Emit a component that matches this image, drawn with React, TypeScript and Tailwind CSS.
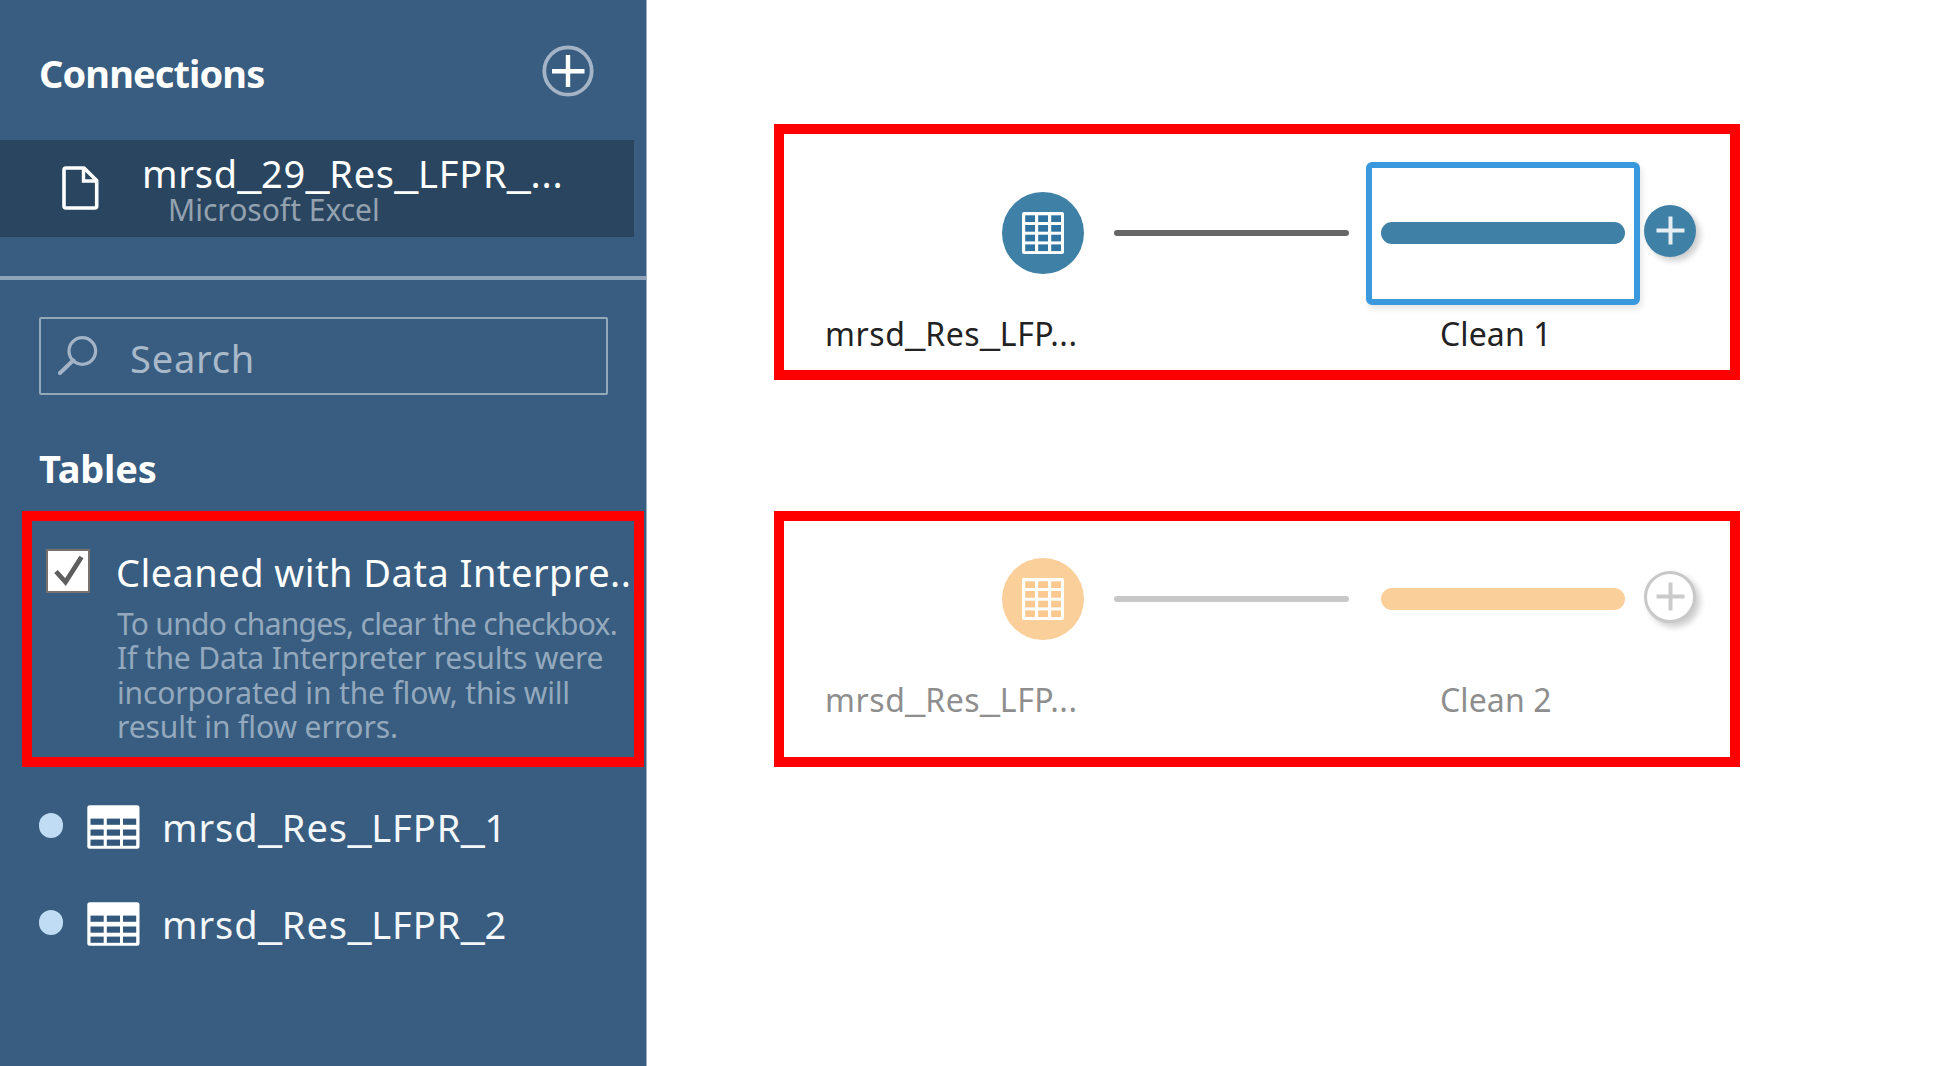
import { Fragment, ReactNode } from "react";

/* Text whose underscores are drawn wider than the body face has them. */
function Wide({ text }: { text: string }) {
  return (
    <>
      {text.split("_").map((part, i) => (
        <Fragment key={i}>
          {i > 0 && (
            <span className="relative -top-[2px] font-['Liberation_Sans',sans-serif] text-[1.1em] leading-none tracking-normal">
              _
            </span>
          )}
          {part}
        </Fragment>
      ))}
    </>
  );
}

function AddIcon() {
  return (
    <svg className="size-[52px]" viewBox="0 0 52 52" fill="none">
      <circle cx="26" cy="26" r="23.7" stroke="#a4b4c6" strokeWidth="3.8" />
      <path d="M10 26.2H42.5M26 10V42" stroke="#fff" strokeWidth="4.4" />
    </svg>
  );
}

function FileIcon() {
  return (
    <svg className="h-11 w-[37px]" viewBox="0 0 37 44" fill="none">
      <path
        d="M4 2H22L34.7 14.5V40Q34.7 42 32.7 42H4Q2 42 2 40V4Q2 2 4 2Z"
        stroke="#fff"
        strokeWidth="3.6"
        strokeLinejoin="round"
      />
      <path d="M21.5 2.5V15H34.5" stroke="#fff" strokeWidth="3.4" />
    </svg>
  );
}

function SearchIcon() {
  return (
    <svg className="h-[42px] w-[41px]" viewBox="0 0 41 42" fill="none" stroke="#a4b4c6">
      <circle cx="25.3" cy="18" r="13.3" strokeWidth="3.2" />
      <path d="M16.3 27.3L3 40" strokeWidth="4" strokeLinecap="round" />
    </svg>
  );
}

function TableIcon() {
  const cols = [3.5, 19.8, 36];
  const rows = [13.6, 24.5, 34.6];
  return (
    <svg className="h-11 w-[53px]" viewBox="0 0 53 44">
      <rect x="0.3" y="0.3" width="52.2" height="43.4" rx="2.5" fill="#fff" />
      {rows.map((y) =>
        cols.map((x) => <rect key={`${x}-${y}`} x={x} y={y} width="13.2" height="6.2" fill="#33587c" />),
      )}
    </svg>
  );
}

function GridIcon({ cell }: { cell: string }) {
  const cols = [3.2, 16.2, 29.2];
  const rows = [3.3, 13, 22.7, 32.4];
  return (
    <svg className="mr-px size-[42px]" viewBox="0 0 42 42">
      <rect width="42" height="42" rx="2" fill="#fff" />
      {rows.map((y) => cols.map((x) => <rect key={`${x}-${y}`} x={x} y={y} width="9.8" height="6.7" fill={cell} />))}
    </svg>
  );
}

function TableRow({ name }: { name: string }) {
  return (
    <div className="flex h-11 items-center pl-[39px]">
      <span className="mb-[3px] h-[25px] w-6 rounded-full bg-[#bfdcf4]" />
      <span className="ml-6">
        <TableIcon />
      </span>
      <span className="mt-[2px] ml-[22px] text-[38px] leading-10 tracking-[0.95px] text-[#f4f7fa]">
        <Wide text={name} />
      </span>
    </div>
  );
}

function Flow({ active, children }: { active: boolean; children: ReactNode }) {
  return (
    <div
      className={`h-64 w-[966px] border-[10px] border-[#ff0000] ${active ? "pt-[27px]" : "pt-[6px]"}`}
    >
      <div className="flex h-[144px] items-center">
        <div
          className={`ml-[218px] flex size-[82px] items-center justify-center rounded-full ${
            active ? "bg-[#3f80a6]" : "bg-[#fbcf9a]"
          }`}
        >
          <GridIcon cell={active ? "#2f74a0" : "#f9c98f"} />
        </div>
        <div
          className={`ml-[30px] h-[6px] w-[235px] rounded-full ${active ? "bg-[#666666]" : "bg-[#c8c8c8]"}`}
        />
        <div
          className={`ml-[17px] flex h-[143px] w-[274px] items-center justify-center rounded-[6px] border-[6px] ${
            active ? "border-[#3a98dd] shadow-[2px_4px_6px_rgba(0,0,0,0.1)]" : "border-transparent"
          }`}
        >
          <div className={`h-[22px] w-[244px] rounded-full ${active ? "bg-[#3f80a6]" : "bg-[#fbcf9a]"}`} />
        </div>
        <div
          className={`mb-[5px] ml-1 flex size-[52px] items-center justify-center rounded-full shadow-[4px_4px_6px_rgba(0,0,0,0.2)] ${
            active ? "bg-[#3f80a6]" : "border-[3px] border-[#c8c8c8] bg-white"
          }`}
        >
          <svg className="size-[29px]" viewBox="0 0 29 29" fill="none">
            <path
              d="M0.5 14.5H28.5M14.5 0.5V28.5"
              stroke={active ? "#e6eef4" : "#cbcbcb"}
              strokeWidth="4"
            />
          </svg>
        </div>
      </div>
      <div
        className={`flex pl-[41px] text-[32px] leading-10 ${active ? "mt-[9px] text-[#222222]" : "mt-[9px] text-[#8e8e8e]"}`}
      >
        {children}
      </div>
    </div>
  );
}

function FlowLabels({ source, step }: { source: string; step: string }) {
  return (
    <>
      <span className="w-[615px] tracking-[0.6px]">
        <Wide text={source} />
      </span>
      <span className="tracking-[0.1px]">{step}</span>
    </>
  );
}

export default function App() {
  return (
    <div className="flex h-[1066px] w-[1933px] overflow-hidden bg-white font-['Noto_Sans',sans-serif] whitespace-nowrap">
      <aside className="flex w-[647px] flex-col border-r border-[#9db0c3] bg-[#385d80]">
        <div className="flex h-[140px] items-start justify-between pr-[52px] pl-[39px]">
          <h2 className="mt-[53px] text-[38px] leading-10 font-bold tracking-[-0.9px] text-white">Connections</h2>
          <span className="mt-[45px]">
            <AddIcon />
          </span>
        </div>

        <div className="flex h-[97px] w-[634px] bg-[#29455f] pl-[62px]">
          <span className="mt-[26px]">
            <FileIcon />
          </span>
          <div className="ml-[43px] pt-[13px]">
            <p className="text-[38px] leading-10 tracking-[0.75px] text-white">
              <Wide text="mrsd_29_Res_LFPR_..." />
            </p>
            <p className="pl-[26px] text-[30px] leading-[30px] text-[#94a2af]">Microsoft Excel</p>
          </div>
        </div>

        <div className="mt-[39px] h-1 bg-[#8fa4b9]" />

        <div className="mt-[37px] ml-[39px] flex h-[78px] w-[569px] items-center rounded-[2px] border-2 border-[#94a8bc]">
          <span className="mb-1 ml-4">
            <SearchIcon />
          </span>
          <span className="mt-1 ml-8 text-[38px] leading-10 tracking-[0.8px] text-[#a9b9c9]">Search</span>
        </div>

        <h2 className="mt-[53px] ml-[39px] text-[38px] leading-10 font-bold tracking-[-0.2px] text-white">Tables</h2>

        <div className="mt-[23px] ml-[22px] flex h-64 w-[622px] overflow-hidden border-[10px] border-[#ff0000]">
          <span className="mt-[28px] ml-[14px] size-11 shrink-0 border-2 border-[#77726e] bg-white">
            <svg className="size-10" viewBox="0 0 40 40" fill="none">
              <path d="M8 20.5L17.5 31L33.5 6" stroke="#5e5e5e" strokeWidth="4.8" />
            </svg>
          </span>
          <div className="ml-[26px] pt-[31px]">
            <p className="text-[38px] leading-10 tracking-[0.45px] text-white">Cleaned with Data Interpre...</p>
            <div className="mt-[15px] ml-px text-[30px] leading-[34.3px] text-[#94a9bd]">
              <p className="tracking-[-0.73px]">To undo changes, clear the checkbox.</p>
              <p className="tracking-[-0.16px]">If the Data Interpreter results were</p>
              <p className="tracking-[-0.16px]">incorporated in the flow, this will</p>
              <p className="tracking-[-0.1px]">result in flow errors.</p>
            </div>
          </div>
        </div>

        <div className="mt-[38px] flex flex-col gap-[53px]">
          <TableRow name="mrsd_Res_LFPR_1" />
          <TableRow name="mrsd_Res_LFPR_2" />
        </div>
      </aside>

      <main className="flex flex-col gap-[131px] pt-[124px] pl-[127px]">
        <Flow active>
          <FlowLabels source="mrsd_Res_LFP..." step="Clean 1" />
        </Flow>
        <Flow active={false}>
          <FlowLabels source="mrsd_Res_LFP..." step="Clean 2" />
        </Flow>
      </main>
    </div>
  );
}
